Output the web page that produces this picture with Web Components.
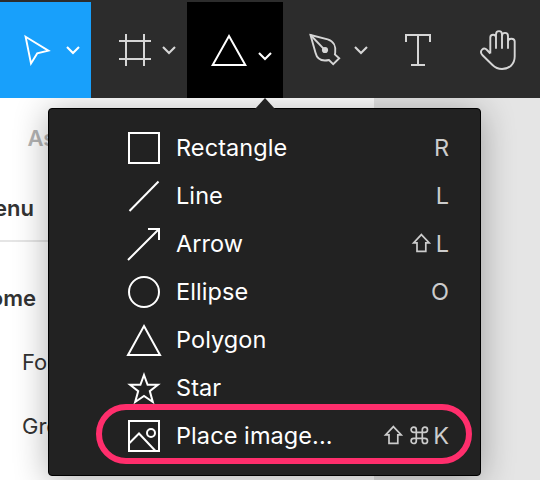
<!DOCTYPE html>
<html lang="en">
<head>
<meta charset="utf-8">
<title>Shape tools</title>
<style>
html, body { margin: 0; height: 100%; overflow: hidden; }
body { font-family: Inter, "Liberation Sans", sans-serif; }
</style>
</head>
<body>
<design-app></design-app>
<script>
const icon = (w, h, body, sw = 2) =>
  `<svg width="${w}" height="${h}" viewBox="0 0 ${w} ${h}" fill="none" stroke="currentColor" stroke-width="${sw}">${body}</svg>`;
const GLYPHS = {
  move: icon(96, 96, '<path d="M25.6 34.8 L48.4 48.6 L37.2 51.4 L31 61.4 Z"/>', 1.9),
  frame: icon(96, 96, '<path d="M35 32V64M53 32V64M28 39H60M28 57H60"/>'),
  shape: icon(96, 96, '<path d="M42 34 L58.3 63 H25.7 Z"/>'),
  pen: icon(96, 96, '<path d="M27.5 33 L44.7 37.3 C50.5 39 53 44.5 52.2 50.6 L51.9 52.4 L56.2 56.3 L50.2 62.1 L46 58 C38.5 59.6 34.2 57.8 32.5 50.8 Z"/><path d="M27.5 33 L41.5 47.7"/><circle cx="42" cy="48" r="3.1" fill="currentColor" stroke="none"/>', 1.9),
  text: icon(96, 96, '<path d="M27 40V33H51V40M39 33V63M32 63H46"/>'),
  hand: icon(96, 96, '<path d="M35.3 51.5V35.4c0-3.6 5.7-3.6 5.7 0V46V32.4c0-4.4 6-4.4 6 0V46V34c0-4.2 6-4.2 6 0V46V39.6c0-3.8 6.7-3.8 6.7 0V54.5C59.7 62.5 54 67 47 67C42.5 67 40 65.5 37.5 63L27.3 53C23.8 48.8 28.7 44.6 32 48L35.3 51.5" stroke-linejoin="round"/>', 1.9),
  chevron: icon(16, 10, '<path d="M2 2 L8 8 L14 2"/>', 2.1),
  rectangle: icon(36, 36, '<rect x="3" y="3" width="30" height="30"/>'),
  line: icon(36, 36, '<path d="M3.5 33 L32.5 3.5"/>'),
  arrow: icon(36, 36, '<path d="M2 34 L33 3M22 3H33V14"/>'),
  ellipse: icon(36, 36, '<circle cx="18" cy="18" r="15"/>'),
  polygon: icon(36, 36, '<path d="M18 4 L34 33 H2 Z"/>'),
  star: icon(36, 36, '<path d="M18 5 L21.6 14.8 H31.9 L23.8 21.1 L26.8 32 L18 26 L9.2 32 L12.2 21.1 L4.1 14.8 H14.4 Z"/>'),
  image: icon(36, 36, '<rect x="3" y="3" width="30" height="30"/><circle cx="25" cy="15" r="4"/><path d="M3 25.5 L13 15.5 L29.5 33"/>'),
  shift: icon(20, 20, '<path d="M10.4 .6 L18.2 8.9 H14.8 V17.3 H6 V8.9 H2.6 Z"/>', 1.7),
  command: icon(20, 20, '<path transform="translate(1.3 -.7)" d="M7 7H13V13H7Z M7 7H4.4A2.6 2.6 0 1 1 7 4.4Z M13 7V4.4A2.6 2.6 0 1 1 15.6 7Z M13 13H15.6A2.6 2.6 0 1 1 13 15.6Z M7 13V15.6A2.6 2.6 0 1 1 4.4 13Z"/>', 1.7)
};
const define = (name, render) => customElements.define(name, class extends HTMLElement {
  constructor() { super(); this.attachShadow({ mode: 'open' }); }
  connectedCallback() { this.shadowRoot.innerHTML = render(this); }
});

define('ui-icon', el => `<style>:host{display:block;line-height:0}svg{display:block;overflow:visible}</style>${GLYPHS[el.getAttribute('name')]}`);

define('tool-button', el => `<style>
  :host{display:grid;grid-template-columns:100%;flex:none;height:96px;width:96px;color:#d6d6d6;overflow:hidden}
  :host([state=active]){width:91px;background:#18a0fb;color:#fff}
  :host([state=open]){background:#000;color:#fff}
  :host([compact]){width:76px}
  ui-icon{grid-area:1/1}
  .chevron{justify-self:end;align-self:start;margin:43px 10px 0 0}
  :host([state=open]) .chevron{margin-top:49px}
  </style><ui-icon name="${el.getAttribute('icon')}"></ui-icon>
  ${el.hasAttribute('menu') ? '<ui-icon class="chevron" name="chevron"></ui-icon>' : ''}`);

define('tool-bar', () => `<style>
  :host{display:flex;box-sizing:border-box;height:98px;padding-top:2px;background:#2c2c2c}
  </style><slot></slot>`);

define('layer-panel', () => `<style>
  :host{display:block;width:374px;height:382px;background:#fff;color:#333;overflow:hidden;font-size:22px;line-height:32px}
  .tab{padding:24px 0 0 27.5px;font-weight:600;color:#b3b3b3}
  .page{display:flex;justify-content:flex-end;width:34px;padding-top:38px;font-weight:600}
  hr{margin:16px 0 0;border:0;height:2px;background:#e5e5e5}
  .home{width:36px;padding-top:40px}
  .child{padding:32px 0 0 22px}
  </style>
  <div class="tab">Assets</div><div class="page">Menu</div><hr>
  <div class="page home">Home</div><div class="child">Footer</div><div class="child">Group</div>`);

define('menu-item', el => `<style>
  :host{display:flex;align-items:center;height:48px;padding:0 31px 0 77px;color:#fff;font-size:23.5px;line-height:48px;letter-spacing:.08px}
  .label{flex:1;margin-left:14px}
  .keys{display:flex;align-items:center;gap:5px;color:#ccc;letter-spacing:0}
  </style><ui-icon name="${el.getAttribute('icon')}"></ui-icon>
  <span class="label"><slot></slot></span><span class="keys"><slot name="keys"></slot></span>`);

define('shape-menu', () => `<style>
  :host{display:block;position:absolute;left:48px;top:108px;box-sizing:border-box;width:433px;height:368px;padding:15px 0;
    background:#222;border:1px solid #000;border-radius:4px;box-shadow:0 4px 34px rgba(0,0,0,.32)}
  .tip{position:absolute;left:206px;top:-11px;width:20px;height:11px;background:#222;clip-path:polygon(50% 0,100% 100%,0 100%)}
  .ring{position:absolute;left:47px;top:295px;box-sizing:border-box;width:376px;height:60px;border:6px solid #ff2e6c;border-radius:30px}
  </style><div class="tip"></div><slot></slot><div class="ring"></div>`);

define('design-app', () => `<style>
  :host{display:block;position:relative;width:540px;height:480px;background:#e5e5e5;overflow:hidden}
  tool-bar{position:relative;z-index:1}
  </style>
  <tool-bar>
    <tool-button icon="move" menu state="active"></tool-button>
    <tool-button icon="frame" menu></tool-button>
    <tool-button icon="shape" menu state="open"></tool-button>
    <tool-button icon="pen" menu></tool-button>
    <tool-button icon="text" compact></tool-button>
    <tool-button icon="hand"></tool-button>
  </tool-bar>
  <layer-panel></layer-panel>
  <shape-menu>
    <menu-item icon="rectangle">Rectangle<span slot="keys">R</span></menu-item>
    <menu-item icon="line">Line<span slot="keys">L</span></menu-item>
    <menu-item icon="arrow">Arrow<ui-icon slot="keys" name="shift"></ui-icon><span slot="keys">L</span></menu-item>
    <menu-item icon="ellipse">Ellipse<span slot="keys">O</span></menu-item>
    <menu-item icon="polygon">Polygon</menu-item>
    <menu-item icon="star">Star</menu-item>
    <menu-item icon="image">Place image...<ui-icon slot="keys" name="shift"></ui-icon><ui-icon slot="keys" name="command"></ui-icon><span slot="keys">K</span></menu-item>
  </shape-menu>`);
</script>
</body>
</html>
